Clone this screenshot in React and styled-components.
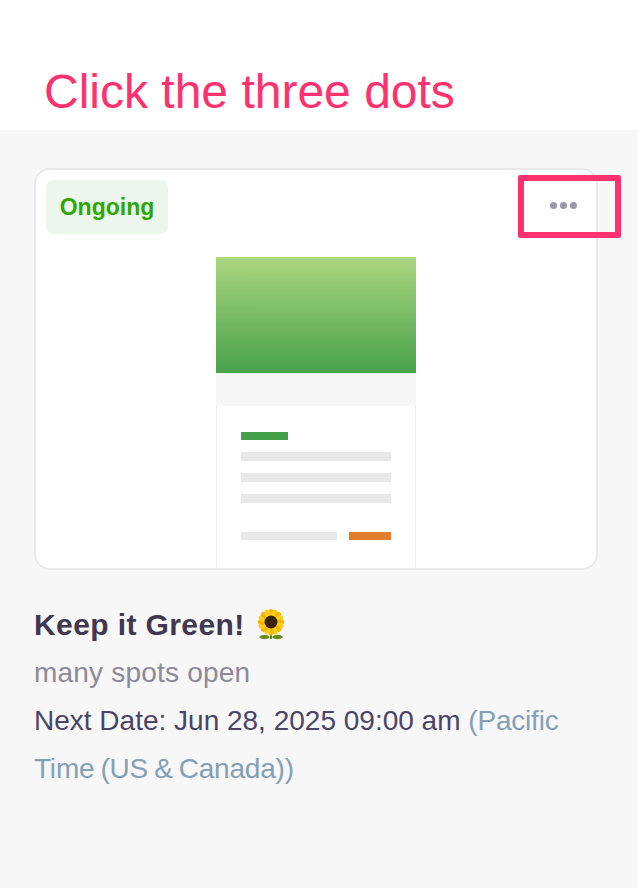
import React from "react";
import styled, { createGlobalStyle } from "styled-components";

const Global = createGlobalStyle`
  html, body { margin: 0; padding: 0; background: #f7f7f7; }
  body { font-family: "Liberation Sans", Arial, sans-serif; }
`;
const Page = styled.div`
  width: 638px; height: 888px; overflow: hidden; background: #f7f7f7; display: flex; flex-direction: column;
`;
const Header = styled.header`
  height: 130px; box-sizing: border-box; background: #fff; padding: 62px 0 0 44px;
`;
const Instruction = styled.h1`
  margin: 0; font-size: 48px; line-height: 60px; font-weight: 400; color: #ff316f; white-space: nowrap;
`;
const Content = styled.main`
  padding: 38px 40px 0 34px; display: flex; flex-direction: column;
`;
const Card = styled.section`
  position: relative; box-sizing: border-box; width: 564px; height: 402px;
  background: #fff; border: 2px solid #e9e9e9; border-radius: 16px;
  display: flex; flex-direction: column; align-items: center;
`;
const Badge = styled.span`
  position: absolute; left: 10px; top: 10px; width: 122px; height: 54px;
  display: flex; align-items: center; justify-content: center;
  background: #ecf6ec; border-radius: 8px; color: #2ea800; font-size: 23px; font-weight: 700;
`;
const Dots = styled.div`
  position: absolute; left: 514px; top: 32px; display: flex; gap: 3px;
`;
const Dot = styled.i`
  width: 7px; height: 7px; border-radius: 50%; background: #9c98a8; display: block;
`;
const Highlight = styled.div`
  position: absolute; left: 482px; top: 5px; width: 103px; height: 63px; box-sizing: border-box;
  border: 6px solid #ff316f; border-radius: 2px;
`;
const Preview = styled.div`
  margin-top: 87px; margin-right: 1px; width: 200px; height: 311px; box-sizing: border-box; display: flex; flex-direction: column;
`;
const Hero = styled.div`
  height: 116px; flex: none; background: linear-gradient(#abd680, #48a24b);
`;
const Band = styled.div`
  height: 33px; flex: none; background: #f6f6f6;
`;
const PreviewBody = styled.div`
  flex: 1; background: #fff; border-left: 1.5px solid #eee; border-right: 1.5px solid #eee;
  padding: 26px 24px 0 24px; display: flex; flex-direction: column;
`;
const Accent = styled.div`
  width: 47px; height: 8px; background: #45a149; margin-bottom: 12px;
`;
const Line = styled.div`
  height: 9px; background: #e8e8e8; margin-bottom: 12px;
`;
const PreviewFoot = styled.div`
  display: flex; justify-content: space-between; margin-top: 17px;
`;
const FootLine = styled.div`
  width: 96px; height: 8px; background: #e8e8e8;
`;
const FootButton = styled.div`
  width: 42px; height: 8px; background: #e27f2e;
`;
const Info = styled.div`
  padding-top: 31px; width: 540px;
`;
const Title = styled.h2`
  margin: 0; font-size: 30px; letter-spacing: 0.4px; line-height: 48px; font-weight: 700; color: #3f3850;
  display: flex; align-items: center; gap: 11px;
`;
const Sub = styled.div`
  font-size: 28px; letter-spacing: 0.2px; line-height: 48px; color: #8c8a99;
`;
const NextDate = styled.div`
  font-size: 28px; line-height: 48px; color: #4a4468;
`;
const Zone = styled.span`
  color: #84a0b8; letter-spacing: -0.2px; word-spacing: -1.5px;
`;

const Sunflower = () => {
  const petals = Array.from({ length: 16 }, (_, i) => i * 22.5);
  return (
    <svg width="30" height="32" viewBox="0 0 30 32" aria-hidden="true">
      <path d="M3 28c3-3 8-3 11 0-3 3-8 3-11 0z" fill="#6a8f1e" />
      <path d="M27 28c-3-3-8-3-11 0 3 3 8 3 11 0z" fill="#5f8a1c" />
      <rect x="14" y="23" width="2" height="7" fill="#5f8a1c" />
      {petals.map((a) => (
        <ellipse key={a} cx="15" cy="4" rx="2.8" ry="4.2" fill={a % 45 === 0 ? "#f7b500" : "#ffcf1a"} transform={`rotate(${a} 15 13)`} />
      ))}
      <circle cx="15" cy="13" r="6.5" fill="#3a2408" />
    </svg>
  );
};

export default function App() {
  return (
    <Page>
      <Global />
      <Header>
        <Instruction>Click the three dots</Instruction>
      </Header>
      <Content>
        <Card>
          <Badge>Ongoing</Badge>
          <Dots><Dot /><Dot /><Dot /></Dots>
          <Preview>
            <Hero />
            <Band />
            <PreviewBody>
              <Accent />
              <Line /><Line /><Line />
              <PreviewFoot><FootLine /><FootButton /></PreviewFoot>
            </PreviewBody>
          </Preview>
          <Highlight />
        </Card>
        <Info>
          <Title>Keep it Green! <Sunflower /></Title>
          <Sub>many spots open</Sub>
          <NextDate>Next Date: Jun 28, 2025 09:00 am <Zone>(Pacific Time (US &amp; Canada))</Zone></NextDate>
        </Info>
      </Content>
    </Page>
  );
}
